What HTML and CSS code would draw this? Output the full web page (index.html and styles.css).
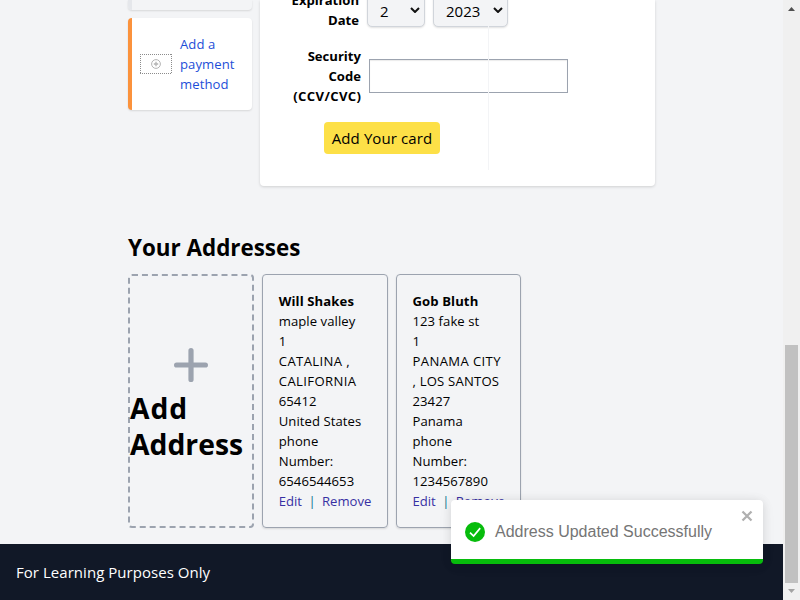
FILE: index.html
```html
<!DOCTYPE html>
<html lang="en">
<head>
<meta charset="utf-8">
<title>Account</title>
<link rel="stylesheet" href="styles.css">
</head>
<body>
<div class="page">
  <main>
    <section class="payments">
      <aside>
        <div class="method previous"></div>
        <a class="method add-method">
          <svg width="32" height="20" viewBox="0 0 32 20" fill="none" stroke="#b4b4b4">
            <path d="M0 .5h32M0 19.500h32M.5 0v20M31.500 0v20" stroke-dasharray="1 1" stroke="#8c8c8c" shape-rendering="crispEdges"/>
            <circle cx="16" cy="10" r="4.4"/>
            <path d="M13.8 10h4.4M16 7.800v4.400" stroke-width="1.300"/>
          </svg>
          <span>Add a<br>payment<br>method</span>
        </a>
      </aside>
      <form class="card-form">
        <div class="expiry">
          <label>Expiration<br>Date</label>
          <div class="select month">2<svg width="10" height="6" viewBox="0 0 10 6"><path d="M1 1l4 4 4-4"/></svg></div>
          <div class="select year">2023<svg width="10" height="6" viewBox="0 0 10 6"><path d="M1 1l4 4 4-4"/></svg></div>
        </div>
        <div class="security">
          <label>Security<br>Code<br><span class="code">(CCV/CVC)</span></label>
          <div class="input"></div>
        </div>
        <button type="button">Add Your card</button>
        <i class="divider"></i>
      </form>
    </section>
    <h1>Your Addresses</h1>
    <section class="addresses">
      <div class="add-address">
        <svg width="34" height="34" viewBox="0 0 34 34"><path d="M17 2.6v28.8M2.6 17h28.8"/></svg>
        <h2><span>Add</span><br>Address</h2>
      </div>
      <article>
        <b>Will Shakes</b>
        <p>maple valley</p><p>1</p><p class="caps">CATALINA ,</p><p class="caps">CALIFORNIA</p><p>65412</p><p>United States</p><p>phone</p><p>Number:</p><p>6546544653</p>
        <div class="actions"><a>Edit</a><i>|</i><a>Remove</a></div>
      </article>
      <article>
        <b>Gob Bluth</b>
        <p>123 fake st</p><p>1</p><p class="caps">PANAMA CITY</p><p class="caps santos">, LOS SANTOS</p><p>23427</p><p>Panama</p><p>phone</p><p>Number:</p><p>1234567890</p>
        <div class="actions"><a>Edit</a><i>|</i><a>Remove</a></div>
      </article>
    </section>
  </main>
  <footer>For Learning Purposes Only</footer>
</div>
<div class="scrollbar">
  <svg width="17" height="17" viewBox="0 0 17 17" fill="#505050"><path d="M5 11h7L8.500 7z"/></svg>
  <div class="thumb"></div>
  <svg width="17" height="17" viewBox="0 0 17 17" fill="#a3a3a3"><path d="M5 6h7L8.500 10z"/></svg>
</div>
<div class="toast">
  <div class="toast-body">
    <svg width="20" height="20" viewBox="0 0 20 20"><circle cx="10" cy="10" r="10" fill="#07bc0c"/><path d="M5 10.600l3.600 3.500 6.600-8" fill="none" stroke="#fff" stroke-width="1.700"/></svg>
    <span>Address Updated Successfully</span>
  </div>
  <svg class="close" width="12" height="12" viewBox="0 0 12 12"><path d="M1.500 1.500l9 9M10.500 1.500l-9 9" stroke="#b0b0b0" stroke-width="2.300"/></svg>
</div>
</body>
</html>
```
FILE: styles.css
```css
* { box-sizing: border-box; margin: 0; padding: 0; }
body {
  display: flex;
  width: 800px;
  height: 600px;
  overflow: hidden;
  background: #f3f4f6;
  color: #000;
  font: 13.1px/20px "Open Sans", sans-serif;
}
.page { width: 783px; height: 600px; display: flex; flex-direction: column; }
main { width: 527px; height: 544px; margin-left: 128px; }
.payments { display: flex; gap: 8px; height: 186px; }
aside { width: 124px; }
.method { border-left: 4px solid #e5e7eb; border-radius: 4px; box-shadow: 0 1px 2px rgba(0, 0, 0, .12); }
.previous { height: 10px; border-top-left-radius: 0; border-top-right-radius: 0; }
.add-method {
  display: flex;
  align-items: center;
  gap: 8px;
  height: 92px;
  margin-top: 8px;
  padding-left: 8px;
  border-left-color: #fb923c;
  background: #fff;
  color: #1d4ed8;
}
.add-method span { letter-spacing: .08px; }
.card-form {
  position: relative;
  width: 395px;
  background: #fff;
  border-radius: 0 0 4px 4px;
  box-shadow: 0 1px 3px rgba(0, 0, 0, .15);
}
label { text-align: right; font-weight: 700; font-size: 13.1px; }
.code { letter-spacing: .38px; margin-right: -.38px; }
.expiry { display: flex; height: 40px; margin-top: -10px; }
.expiry label { width: 99px; margin-right: 8px; }
.select {
  display: flex;
  align-items: center;
  justify-content: space-between;
  height: 37px;
  padding: 4px 4px 0 12px;
  border: 1px solid #d1d5db;
  border-radius: 5px;
  background: #f3f4f6;
  box-shadow: 0 1px 2px rgba(0, 0, 0, .12);
  font-size: 15px;
}
.select svg { margin-bottom: 2px; fill: none; stroke: #111; stroke-width: 2; }
.month { width: 58px; margin-right: 8px; }
.year { width: 75px; }
.security { display: flex; align-items: center; height: 60px; margin-top: 16px; }
.security label { width: 101px; margin-right: 8px; }
.input { width: 199px; height: 34px; border: 1px solid #9ca3af; box-shadow: inset 0 1px 1px rgba(0, 0, 0, .08); }
button {
  display: block;
  width: 116px;
  height: 32px;
  margin: 16px 0 0 64px;
  border: 0;
  border-radius: 4px;
  background: #fde047;
  font: 15px/32px "Open Sans", sans-serif;
  letter-spacing: .1px;
  white-space: nowrap;
}
.divider { position: absolute; left: 228px; top: 0; width: 1px; height: 170px; background: #f3f4f6; }
h1 { margin-top: 46px; font-size: 22.400px; line-height: 32px; white-space: nowrap; }
.addresses {
  display: grid;
  grid-template-columns: repeat(4, 1fr);
  gap: 8px;
  height: 254px;
  margin-top: 10px;
}
.add-address {
  display: flex;
  flex-direction: column;
  justify-content: center;
  border: 2px dashed #9ca3af;
  border-radius: 4px;
}
.add-address svg { align-self: center; margin-top: 8px; margin-bottom: 8px; fill: none; stroke: #9ca3af; stroke-width: 5.200; stroke-linecap: round; }
h2 { font-size: 28.300px; line-height: 36px; }
h2 span { letter-spacing: .9px; }
article {
  min-width: 0;
  padding: 16px 0 16px 16px;
  border: 1px solid #9ca3af;
  border-radius: 4px;
  box-shadow: 0 1px 2px rgba(0, 0, 0, .12);
  white-space: nowrap;
}
article b { display: block; letter-spacing: .1px; }
article p { letter-spacing: .06px; }
article .caps { letter-spacing: .38px; }
article .santos { letter-spacing: .2px; }
.actions { display: flex; color: #3730a3; }
.actions i { width: 20px; text-align: center; font-style: normal; color: #0e7490; }
footer { height: 56px; padding: 0 16px; background: #111827; color: #fff; font-size: 15px; line-height: 57px; letter-spacing: .04px; }
.scrollbar { display: flex; flex-direction: column; width: 17px; height: 600px; background: #f0f0f0; }
.scrollbar svg { display: block; flex: none; }
.thumb { width: 13px; height: 238px; margin: auto 2px 0; background: #c1c1c1; }
.toast {
  position: absolute;
  left: 451px;
  top: 500px;
  width: 312px;
  height: 64px;
  overflow: visible;
  border-bottom: 5px solid #07bc0c;
  border-radius: 4px;
  background: #fff;
  box-shadow: 0 1px 10px rgba(0, 0, 0, .1), 0 2px 15px rgba(0, 0, 0, .05);
}
.toast-body { display: flex; align-items: center; gap: 10px; height: 64px; padding-left: 14px; color: #757575; font: 16px/20px "Liberation Sans", sans-serif; white-space: nowrap; }
.close { position: absolute; right: 10px; top: 10px; }
```
